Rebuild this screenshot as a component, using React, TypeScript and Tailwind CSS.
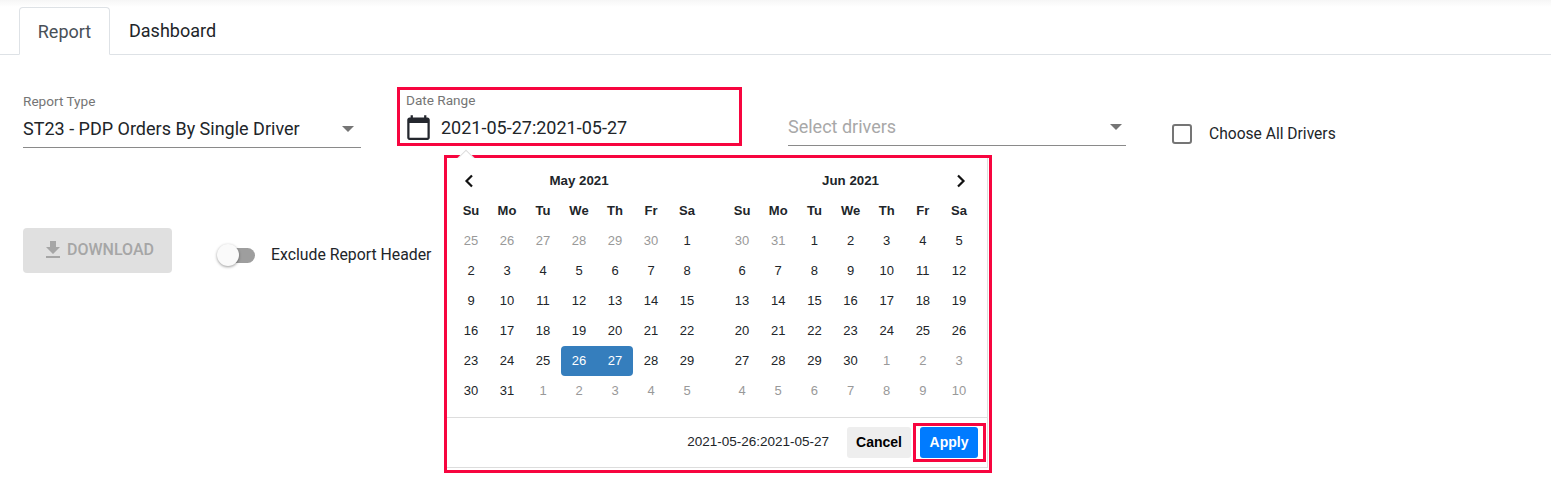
const weekdays = ['Su', 'Mo', 'Tu', 'We', 'Th', 'Fr', 'Sa']

type Day = { label: number; muted?: boolean; selected?: 'start' | 'end' }

const seq = (from: number, to: number, muted = false): Day[] =>
  Array.from({ length: to - from + 1 }, (_, i) => ({ label: from + i, muted }))

const may: Day[] = [
  ...seq(25, 30, true),
  ...seq(1, 25),
  { label: 26, selected: 'start' },
  { label: 27, selected: 'end' },
  ...seq(28, 31),
  ...seq(1, 5, true),
]
const june: Day[] = [...seq(30, 31, true), ...seq(1, 30), ...seq(1, 10, true)]

function Caret() {
  return <span className="h-0 w-0 border-x-[6px] border-t-[6px] border-x-transparent border-t-[#757575]" />
}

function Chevron({ dir }: { dir: 'left' | 'right' }) {
  return (
    <svg
      width="12"
      height="14"
      viewBox="0 0 12 14"
      fill="none"
      stroke="#111"
      strokeWidth="2.2"
      className={dir === 'left' ? '-translate-x-[2px]' : 'translate-x-[2px]'}
    >
      <path d={dir === 'left' ? 'M9 1.5 3.5 7 9 12.5' : 'M3 1.5 8.5 7 3 12.5'} />
    </svg>
  )
}

function Month({ title, days, prev, next, cell }: { title: string; days: Day[]; prev?: boolean; next?: boolean; cell: string }) {
  return (
    <div className={`grid ${cell} auto-rows-[30px] items-center text-center text-[13px] text-[#212529]`}>
      <div className="flex justify-center">{prev && <Chevron dir="left" />}</div>
      <div className="col-span-5 text-[13.3px] font-bold">{title}</div>
      <div className="flex justify-center">{next && <Chevron dir="right" />}</div>
      {weekdays.map((d) => (
        <div key={d} className="font-bold">
          {d}
        </div>
      ))}
      {days.map((d, i) => (
        <div
          key={i}
          className={`flex h-[30px] items-center justify-center ${d.muted ? 'text-[#999]' : ''} ${
            d.selected ? 'bg-[#357ebd] text-white' : ''
          } ${d.selected === 'start' ? 'rounded-l' : ''} ${d.selected === 'end' ? 'rounded-r' : ''}`}
        >
          {d.label}
        </div>
      ))}
    </div>
  )
}

function DatePopup() {
  return (
    <div className="absolute left-[44px] top-[65px] z-10 w-[548px] border-[3px] border-[#f7053f] bg-white font-['Liberation_Sans',sans-serif]">
      <div className="absolute -top-[11px] left-[9px] h-[11px] w-[20px] overflow-hidden">
        <div className="mx-auto mt-[5px] h-3 w-3 rotate-45 border border-[#ddd] bg-white" />
      </div>
      <div className="mb-[2px] mr-[1px] border-b border-r border-[#ddd]">
        <div className="flex gap-[19px] pb-[11px] pl-[6px] pt-[8px]">
          <Month title="May 2021" days={may} prev cell="grid-cols-[repeat(7,36px)]" />
          <Month title="Jun 2021" days={june} next cell="grid-cols-[repeat(7,36.17px)]" />
        </div>
        <div className="flex h-[50px] items-center justify-end border-t border-[#ddd] pr-[1px]">
          <span className="mr-[18px] text-[13.5px] text-[#212529]">2021-05-26:2021-05-27</span>
          <button className="h-[31px] w-[64px] rounded-[3px] bg-[#eee] pb-px text-[14px] font-bold text-black">Cancel</button>
          <div className="ml-[2px] border-[3px] border-[#f7053f] py-px pl-1 pr-[5px]">
            <button className="block h-[31px] w-[58px] rounded-[3px] bg-[#007bff] pb-px text-[14px] font-bold text-white">Apply</button>
          </div>
        </div>
      </div>
    </div>
  )
}

export default function App() {
  return (
    <div className="h-[502px] w-[1551px] overflow-hidden bg-white font-['Roboto',sans-serif] text-[#212529]">
      <div className="h-[55px] border-b border-[#dee2e6] bg-gradient-to-b from-[#f6f6f6] to-white to-[7px] pl-[19px] pt-[7px]">
        <div className="flex text-[18px]">
          <div className="flex h-[48px] w-[91px] items-center justify-center rounded-t border border-b-white border-[#dee2e6] bg-white text-[#495057]">
            Report
          </div>
          <div className="flex h-[47px] items-center px-[19px]">Dashboard</div>
        </div>
      </div>

      <div className="flex pl-[23px] pt-[32px]">
        <div className="w-[338px] pt-[7px]">
          <div className="text-[13.6px] leading-[15px] text-[#757575]">Report Type</div>
          <div className="flex h-[39px] items-center justify-between border-b border-[#8a8a8a] pr-[7px] pt-px text-[18px]">
            <span>ST23 - PDP Orders By Single Driver</span>
            <Caret />
          </div>
        </div>

        <div className="relative ml-[36px] h-[59px] w-[345px] border-[3px] border-[#f7053f] pl-[6px] pt-[3px]">
          <div className="text-[13.6px] leading-[15px] text-[#757575]">Date Range</div>
          <div className="mt-[6px] flex items-center">
            <svg width="27" height="27" viewBox="0 0 24 24" fill="#24272e" className="shrink-0 -ml-[1px]">
              <path d="M20 3h-1V1h-2v2H7V1H5v2H4c-1.1 0-2 .9-2 2v16c0 1.1.9 2 2 2h16c1.1 0 2-.9 2-2V5c0-1.1-.9-2-2-2zm0 18H4V8h16v13z" />
            </svg>
            <span className="ml-[9px] text-[18px]">2021-05-27:2021-05-27</span>
          </div>
          <DatePopup />
        </div>

        <div className="ml-[46px] flex h-[59px] w-[338px] items-end">
          <div className="flex h-[38px] w-full items-center justify-between border-b border-[#8a8a8a] pr-[4px] text-[18px] text-[#a8a8a8]">
            <span>Select drivers</span>
            <Caret />
          </div>
        </div>

        <div className="ml-[46px] flex h-[59px] items-start pt-[37px]">
          <span className="h-[20px] w-[20px] rounded-[3px] border-2 border-[#757575]" />
          <span className="ml-[17px] text-[15.6px] leading-[20px]">Choose All Drivers</span>
        </div>
      </div>

      <div className="mt-[80px] flex pl-[23px]">
        <button className="flex h-[45px] w-[149px] items-center justify-center rounded bg-[#e0e0e0] pb-px text-[16px] font-medium text-[#a6a6a6]">
          <svg width="24" height="24" viewBox="0 0 24 24" fill="#a6a6a6" className="mr-[2px]">
            <path d="M19 9h-4V3H9v6H5l7 7 7-7zM5 18v2h14v-2H5z" />
          </svg>
          DOWNLOAD
        </button>
        <div className="ml-[47px] mt-[15px] flex h-[24px] items-center">
          <div className="relative h-[15px] w-[36px] rounded-full bg-[#9e9e9e]">
            <span className="absolute -left-[2px] -top-[4px] h-[22px] w-[22px] rounded-full bg-[#fafafa] shadow-[0_1px_3px_rgba(0,0,0,0.4)]" />
          </div>
          <span className="ml-[16px] text-[15.8px]">Exclude Report Header</span>
        </div>
      </div>
    </div>
  )
}
